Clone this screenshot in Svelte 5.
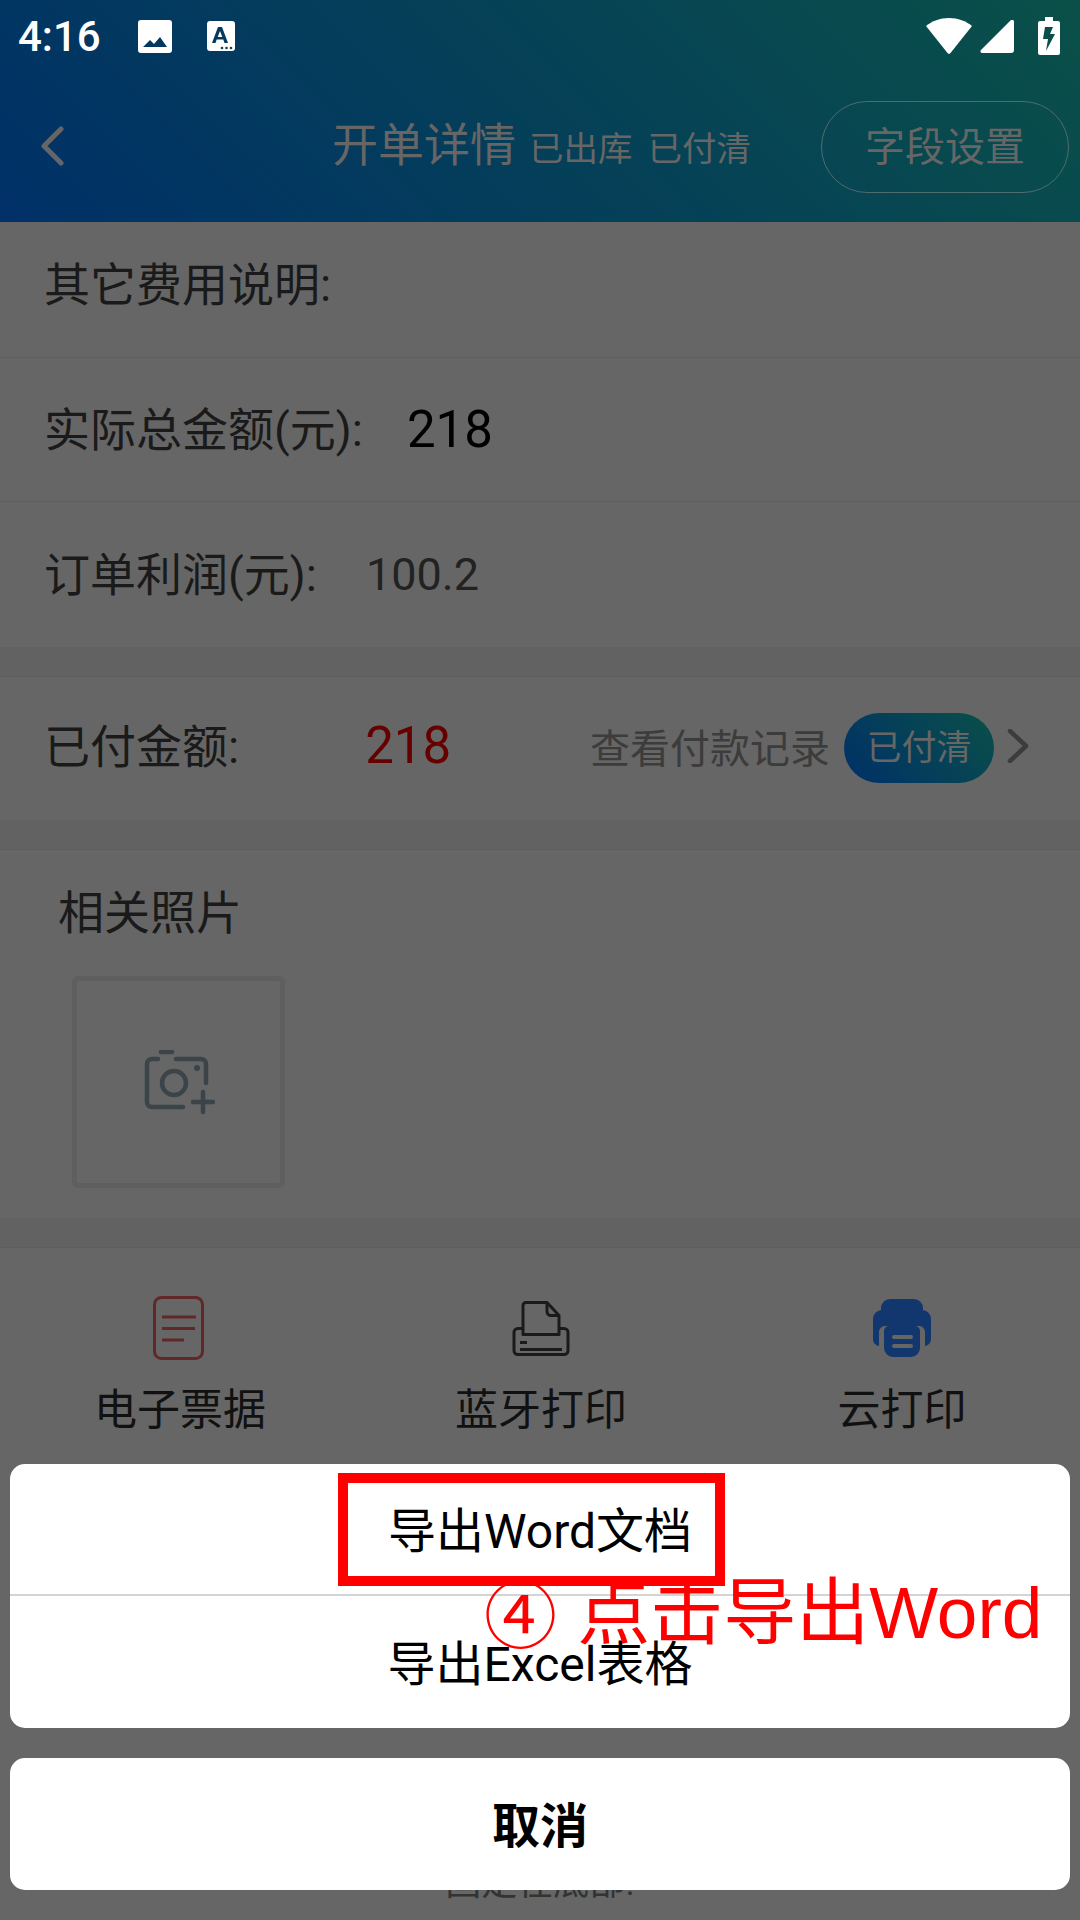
<script>
  const rows = [
    { label: '其它费用说明:', value: '', cls: 'first' },
    { label: '实际总金额(元):', value: '218', cls: 'total' },
    { label: '订单利润(元):', value: '100.2', cls: 'profit' }
  ];
  const actions = ['导出Word文档', '导出Excel表格'];
</script>

<div class="page">
  <header class="top">
    <div class="status">
      <span class="time">4:16</span>
      <svg class="st-img" viewBox="0 0 34 33">
        <path fill="#fff" fill-rule="evenodd" d="M3 0h28a3 3 0 0 1 3 3v27a3 3 0 0 1-3 3H3a3 3 0 0 1-3-3V3a3 3 0 0 1 3-3zM5 27h24l-7-10-6 7-4-4z" />
      </svg>
      <svg class="st-a" viewBox="0 0 28 30">
        <path fill="#fff" fill-rule="evenodd" d="M3 0h22a3 3 0 0 1 3 3v24a3 3 0 0 1-3 3H3a3 3 0 0 1-3-3V3a3 3 0 0 1 3-3zM11 6 5 22h3.500l1.200-3.500h6.600l1.200 3.500H21L15 6zM13 10l2.300 6h-4.600z" />
        <circle cx="15" cy="27" r="1.300" fill="#0a4560" />
        <circle cx="19.500" cy="27" r="1.300" fill="#0a4560" />
        <circle cx="24" cy="27" r="1.300" fill="#0a4560" />
      </svg>
      <span class="grow"></span>
      <svg class="st-wifi" viewBox="0 0 46 36">
        <path fill="#fff" d="M23 0C14 0 6 3 0 8l21.500 27a2 2 0 0 0 3 0L46 8C40 3 32 0 23 0z" />
      </svg>
      <svg class="st-signal" viewBox="0 0 34 33">
        <path fill="#fff" d="M31 0 1 30c-1 1-.5 3 1 3h29a3 3 0 0 0 3-3V1.500C34 0 32 -1 31 0z" />
      </svg>
      <svg class="st-batt" viewBox="0 0 22 38">
        <path fill="#fff" fill-rule="evenodd" d="M7 0h8v4h5a2 2 0 0 1 2 2v30a2 2 0 0 1-2 2H2a2 2 0 0 1-2-2V6a2 2 0 0 1 2-2h5zM7 10 5 22h5l-2 12 9-17h-5l3-7z" />
      </svg>
    </div>
    <div class="nav">
      <svg class="back" viewBox="0 0 24 40">
        <path d="M21 3 4 20l17 17" fill="none" stroke="#666" stroke-width="5" stroke-linecap="round" stroke-linejoin="round" />
      </svg>
      <div class="title">
        <span class="t-main">开单详情</span>
        <span class="t-sub">已出库</span>
        <span class="t-sub">已付清</span>
      </div>
      <div class="fields-btn">字段设置</div>
    </div>
  </header>

  <section class="block">
    {#each rows as r}
      <div class="row {r.cls}">
        <span class="label">{r.label}</span>
        {#if r.value}<span class="val">{r.value}</span>{/if}
      </div>
    {/each}
  </section>

  <section class="block paid">
    <span class="label">已付金额:</span>
    <span class="paid-val">218</span>
    <span class="grow"></span>
    <span class="record">查看付款记录</span>
    <span class="pill">已付清</span>
    <svg class="chev" viewBox="0 0 22 34">
      <path d="M3 2l16 15L3 32" fill="none" stroke="#3c3c3c" stroke-width="4.500" stroke-linecap="round" stroke-linejoin="round" />
    </svg>
  </section>

  <section class="block photos">
    <div class="ph-title">相关照片</div>
    <div class="ph-box">
      <svg viewBox="0 0 72 72" class="cam">
        <g fill="none" stroke="#3a4449" stroke-width="4.500" stroke-linecap="round">
          <path d="M15 9H9a5 5 0 0 0-5 5v38a5 5 0 0 0 5 5h31" />
          <path d="M33 9h25a5 5 0 0 1 5 5v19" />
          <path d="M18 2h11" />
          <circle cx="31" cy="33" r="12" />
          <path d="M50 52h20M60 42v20" />
        </g>
        <circle cx="54" cy="18" r="3" fill="#3a4449" />
      </svg>
    </div>
  </section>

  <section class="block tail">
    <div class="tools">
      <div class="tool">
        <svg class="ic-doc" viewBox="0 0 51 64">
          <rect x="1.500" y="1.500" width="48" height="61" rx="7" fill="none" stroke="#602828" stroke-width="3" />
          <path d="M9 21h34M9 32.500h33M9 44h22" stroke="#602828" stroke-width="3" />
        </svg>
        <span>电子票据</span>
      </div>
      <div class="tool">
        <svg class="ic-print" viewBox="0 0 58 55">
          <g fill="none" stroke="#1a1a1a" stroke-width="3" stroke-linejoin="round">
            <path d="M11 34V5a3 3 0 0 1 3-3h21l12 13v19z" />
            <path d="M35 2v9a4 4 0 0 0 4 4h8" />
            <path d="M11 28H6a4 4 0 0 0-4 4v18a4 4 0 0 0 4 4h46a4 4 0 0 0 4-4V32a4 4 0 0 0-4-4h-5" />
            <path d="M8 42h7M8 49h42" />
          </g>
        </svg>
        <span>蓝牙打印</span>
      </div>
      <div class="tool">
        <svg class="ic-cloud" viewBox="0 0 58 58">
          <path fill="#12376f" d="M8 11V9a9 9 0 0 1 9-9h24a9 9 0 0 1 9 9v2a9 9 0 0 1 8 9v20a7 7 0 0 1-6 7V33a6 6 0 0 0-6-6H12a6 6 0 0 0-6 6v14a7 7 0 0 1-6-7V20a9 9 0 0 1 8-9z" />
          <path fill="#12376f" fill-rule="evenodd" d="M16 27h26a5 5 0 0 1 5 5v17a9 9 0 0 1-9 9H20a9 9 0 0 1-9-9V32a5 5 0 0 1 5-5zM21 36a1.500 1.500 0 0 0 0 4h17a1.500 1.500 0 0 0 0-4zM21 45a1.500 1.500 0 0 0 0 4h17a1.500 1.500 0 0 0 0-4z" />
        </svg>
        <span>云打印</span>
      </div>
    </div>
    <div class="hint">固定在底部!</div>
  </section>

  <div class="sheet">
    <div class="card">
      {#each actions as a}
        <div class="action">{a}</div>
      {/each}
    </div>
    <div class="card cancel">取消</div>
  </div>

  <div class="mark-box"></div>
  <div class="mark-text"><span class="circled">④</span> 点击导出Word</div>
</div>

<style>
  :global(body) {
    background: #666;
  }
  .page {
    position: relative;
    width: 1080px;
    height: 1920px;
    overflow: hidden;
    display: flex;
    flex-direction: column;
    gap: 29px;
    background: #626262;
    color: #1a1a1a;
    font-family: Roboto, "Noto Sans CJK SC", sans-serif;
  }
  .grow { flex: 1; }

  .top {
    flex: none;
    height: 222px;
    margin-bottom: -29px;
    background: linear-gradient(45deg, #003068, #0a5048);
  }
  .status {
    display: flex;
    align-items: center;
    height: 72px;
    padding: 0 20px 0 18px;
  }
  .time { color: #fff; font-size: 42px; font-weight: 500; width: 120px; }
  .st-img { width: 34px; height: 33px; margin-right: 35px; }
  .st-a { width: 28px; height: 30px; }
  .st-wifi { width: 46px; height: 36px; margin-right: 8px; }
  .st-signal { width: 34px; height: 33px; margin-right: 24px; }
  .st-batt { width: 22px; height: 38px; }

  .nav {
    display: flex;
    align-items: center;
    height: 150px;
    padding: 0 11px 0 40px;
    color: #666;
  }
  .back { width: 24px; height: 40px; margin-bottom: 3px; }
  .title {
    display: flex;
    align-items: baseline;
    gap: 13px;
    margin: 0 0 12px 268px;
    flex: 1;
  }
  .t-main { font-size: 46px; }
  .t-sub { font-size: 34.500px; }
  .t-sub:last-child { margin-left: 2px; }
  .fields-btn {
    width: 248px;
    height: 92px;
    box-sizing: border-box;
    padding-bottom: 6px;
    border: 1px solid #4f6b6e;
    border-radius: 46px;
    display: flex;
    align-items: center;
    justify-content: center;
    font-size: 40px;
  }

  .block {
    flex: none;
    box-sizing: border-box;
    background: #666;
  }
  .row {
    display: flex;
    align-items: center;
    box-sizing: border-box;
    height: 144px;
    padding: 0 0 8px 44px;
    border-bottom: 1px solid #5e5e5e;
  }
  .row.first { height: 136px; padding-bottom: 18px; }
  .row.profit { height: 145px; border-bottom: none; }
  .label { font-size: 46px; }
  .val { margin-top: 8px; }
  .total .val { font-size: 51px; color: #000; margin-left: 44px; }
  .profit .val { font-size: 45px; color: #222; margin-left: 49px; }

  .paid {
    display: flex;
    align-items: center;
    height: 144px;
    padding: 0 51px 12px 44px;
    border-top: 1px solid #5e5e5e;
  }
  .paid-val { font-size: 51px; color: #660000; margin: 6px 0 0 126px; }
  .record { font-size: 40px; color: #3c3c3c; margin-top: 6px; }
  .pill {
    box-sizing: border-box;
    width: 150px;
    height: 70px;
    margin: 10px 13px 0 14px;
    padding-bottom: 6px;
    border-radius: 35px;
    display: flex;
    align-items: center;
    justify-content: center;
    font-size: 35px;
    color: #666;
    background: linear-gradient(45deg, #003068, #0a5048);
  }
  .chev { width: 22px; height: 34px; margin-top: 6px; }

  .photos {
    height: 369px;
    border-top: 1px solid #5e5e5e;
    padding: 33px 0 0 58px;
  }
  .ph-title { font-size: 46px; line-height: 60px; }
  .ph-box {
    box-sizing: border-box;
    width: 213px;
    height: 212px;
    margin: 33px 0 0 14px;
    padding-top: 8px;
    border: 5px solid #5f5f5f;
    border-radius: 6px;
    display: flex;
    align-items: center;
    justify-content: center;
  }
  .cam { width: 72px; height: 72px; }

  .tail {
    flex: 1;
    border-top: 1px solid #5e5e5e;
  }
  .tools {
    display: grid;
    grid-template-columns: repeat(3, 1fr);
    padding-top: 48px;
  }
  .tool {
    display: flex;
    flex-direction: column;
    align-items: center;
    font-size: 43px;
    color: #111;
  }
  .tool:nth-child(2) { padding-left: 2px; }
  .tool:last-child { padding-left: 4px; }
  .tool svg { height: 64px; margin-bottom: 15px; }
  .ic-doc { width: 51px; margin-right: 3px; }
  .ic-print { width: 58px; }
  .ic-cloud { width: 58px; }

  .hint {
    margin-top: 416px;
    text-align: center;
    font-size: 36px;
    color: #333;
  }

  .sheet {
    position: absolute;
    left: 10px;
    right: 10px;
    top: 1464px;
    display: flex;
    flex-direction: column;
    gap: 30px;
  }
  .card {
    background: #fff;
    border-radius: 15px;
    color: #000;
  }
  .action {
    box-sizing: border-box;
    height: 132px;
    display: flex;
    align-items: center;
    justify-content: center;
    padding-bottom: 4px;
    font-size: 48px;
  }
  .action:first-child { border-bottom: 2px solid #d4d4d4; }
  .cancel {
    height: 132px;
    display: flex;
    align-items: center;
    justify-content: center;
    padding-bottom: 4px;
    box-sizing: border-box;
    font-size: 48px;
    font-weight: 700;
  }

  .mark-box {
    position: absolute;
    left: 338px;
    top: 1473px;
    width: 387px;
    height: 113px;
    box-sizing: border-box;
    border: 10px solid #f00;
  }
  .mark-text {
    position: absolute;
    left: 484px;
    top: 1573px;
    font-family: "Liberation Sans", "Noto Sans CJK SC", sans-serif;
    font-size: 73px;
    line-height: 80px;
    color: #f00;
    white-space: nowrap;
  }
  .circled { position: relative; top: 4px; }
</style>
